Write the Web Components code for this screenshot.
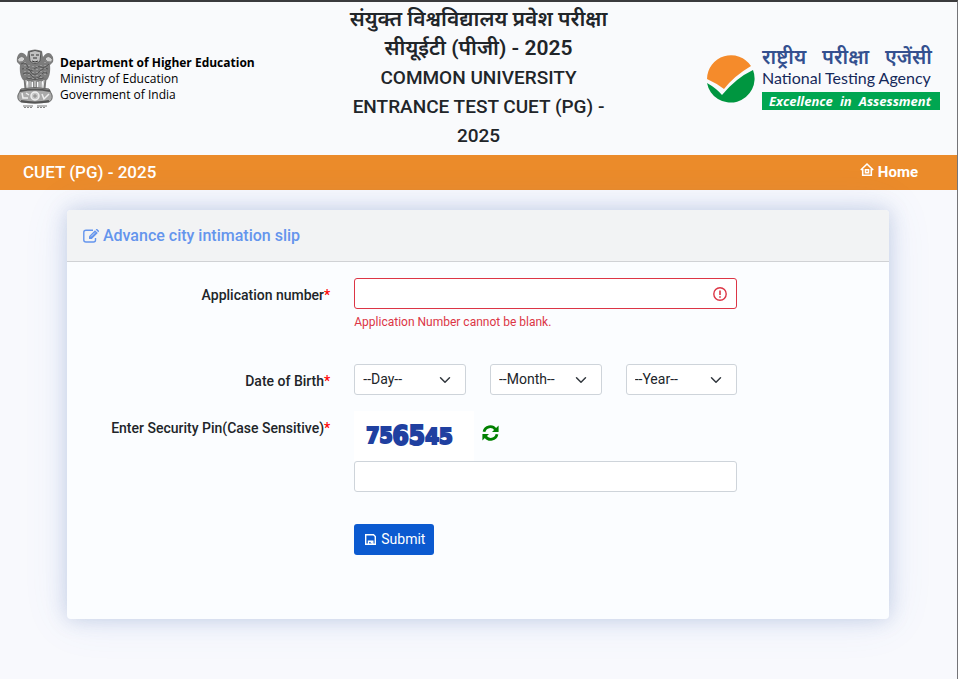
<!DOCTYPE html>
<html lang="en">
<head>
<meta charset="utf-8">
<meta name="viewport" content="width=device-width, initial-scale=1">
<title>CUET (PG) - 2025</title>
<style>
  body {
    margin: 0;
    min-height: 100vh;
    box-sizing: border-box;
    border-top: 2px solid #3b3b3d;
    border-right: 1px solid #747478;
    background-color: #f8f9fd;
    color: #212529;
    font-family: Roboto, "Noto Sans Devanagari", "Noto Sans", sans-serif;
    font-size: 14px;
    line-height: 21px;
  }
  main { padding-right: 1px; }
</style>
</head>
<body>
<site-header></site-header>
<nav-bar>CUET (PG) - 2025</nav-bar>
<main>
  <form-card>
    <span slot="title">Advance city intimation slip</span>
    <slip-form></slip-form>
  </form-card>
</main>

<template id="site-header">
  <style>
    :host {
      display: grid;
      grid-template-columns: 1fr 1fr 1fr;
      align-items: center;
      background-color: #f9fafc;
      min-height: 153px;
    }
    h1 {
      margin: 0;
      padding: 0 12px 2px;
      font-size: 19px;
      line-height: 29px;
      font-weight: 500;
      text-align: center;
    }
    .hindi {
      display: block;
      font-size: 21px;
      font-weight: 600;
    }
    dept-logo { margin-left: 16px; }
    nta-logo { justify-self: end; margin-right: 17px; }
  </style>
  <dept-logo></dept-logo>
  <h1><span class="hindi">संयुक्त विश्वविद्यालय प्रवेश परीक्षा सीयूईटी (पीजी) - 2025</span>COMMON UNIVERSITY ENTRANCE TEST CUET (PG) - 2025</h1>
  <nta-logo></nta-logo>
</template>

<template id="dept-logo">
  <style>
    :host {
      display: flex;
      align-items: center;
      gap: 6px;
      font-family: "Open Sans", sans-serif;
      font-size: 12px;
      line-height: 16px;
      color: #000;
      white-space: nowrap;
    }
    svg { flex: none; }
    p { margin: 0; }
  </style>
  <svg width="38" height="60" viewBox="0 0 38 60" aria-hidden="true">
    <!-- lions -->
    <path d="M12 2Q19-1 26 2L27 8Q31 2 35 5Q38 8 37 13L34 16Q35 26 31 31Q19 35 7 31Q3 26 4 16L1 13Q0 7 4 4Q8 3 11 8Z" fill="#7c7c7c"/>
    <path d="M13 3Q19 0 25 3L24 12Q19 17 14 12Z" fill="#c2c2c2" stroke="#555"/>
    <path d="M15 6H18M20 6H23M17 9H21M16 12Q19 14 22 12" stroke="#333" fill="none"/>
    <path d="M2 10Q6 5 9 10Q7 14 3 13M36 10Q32 5 29 10Q31 14 35 13" fill="#d2d2d2" stroke="#777"/>
    <path d="M5 15Q10 12 12 18T18 20T25 18T33 15M6 20Q12 18 15 23T23 23T32 20M7 25Q12 22 16 27T25 26T31 25M10 29Q19 32 28 29" fill="none" stroke="#555"/>
    <path d="M9 13V28M13 16V30M17 17V31M21 17V31M25 16V30M29 13V28" stroke="#bbb" stroke-dasharray="1 2"/>
    <!-- legs -->
    <path d="M9 29L10 40M14 30V41M24 30V41M29 29L28 40" stroke="#777" stroke-width="3"/>
    <path d="M19 31V40" stroke="#888" stroke-width="4"/>
    <path d="M10 31L11 39M14 32V40M19 32V40M24 32V40M28 31L27 39" stroke="#e4e4e4"/>
    <!-- abacus -->
    <path d="M5 40Q19 37 33 40L36 46Q37 51 33 53Q19 55 5 53Q1 51 2 46Z" fill="#aaa" stroke="#666"/>
    <path d="M4 42Q19 39 34 42M5 52Q19 55 33 52" fill="none" stroke="#555" stroke-width="2"/>
    <circle cx="19" cy="47" r="4" fill="#c8c8c8" stroke="#eee" stroke-width="1.5"/>
    <path d="M17 47H21M19 45V49" stroke="#888"/>
    <path d="M6 44L7 49H12M26 45L28 50L33 45M10 44L13 46" fill="none" stroke="#eee" stroke-width="1.500"/>
    <path d="M7 57H17M21 57H31" stroke="#777"/>
    <path d="M8 58.500H17M21 58.500H30" stroke="#888" stroke-dasharray="2 1"/>
  </svg>
  <div>
    <p><b>Department of Higher Education</b></p>
    <p>Ministry of Education</p>
    <p>Government of India</p>
  </div>
</template>

<template id="nta-logo">
  <style>
    :host {
      display: flex;
      align-items: center;
      gap: 6px;
      white-space: nowrap;
    }
    svg { flex: none; }
    p { margin: 0; }
    .text { width: 178px; }
    .hindi {
      margin-right: 8px;
      text-align-last: justify;
      font-size: 20px;
      line-height: 20px;
      font-weight: 600;
      color: #34508f;
    }
    .name {
      font-family: Lato, sans-serif;
      font-size: 16px;
      line-height: 22px;
      color: #15295a;
    }
    .motto {
      margin-top: 3px;
      padding: 0 9px 0 7px;
      background-color: #00a651;
      color: #fff;
      font-family: "Open Sans", sans-serif;
      font-size: 13px;
      line-height: 18px;
      font-weight: 700;
      font-style: italic;
      text-align-last: justify;
    }
  </style>
  <svg width="49" height="53" viewBox="0 0 49 53" aria-hidden="true">
    <path d="M0 27A24 24 0 0 1 44 14Q27 24 17 37Q9 31 0 27Z" fill="#f58b2b"/>
    <path d="M0 31Q9 36 15 43Q29 26 46 18A24 24 0 1 1 0 31Z" fill="#009640"/>
  </svg>
  <div class="text">
    <p class="hindi">राष्ट्रीय परीक्षा एजेंसी</p>
    <p class="name">National Testing Agency</p>
    <p class="motto">Excellence in Assessment</p>
  </div>
</template>

<template id="nav-bar">
  <style>
    :host {
      display: flex;
      justify-content: space-between;
      align-items: center;
      min-height: 35px;
      padding: 0 39px 0 23px;
      background-color: #eb8b2a;
      color: #fff;
      font-size: 17px;
      font-weight: 500;
    }
    a {
      display: flex;
      gap: 4px;
      color: inherit;
      text-decoration: none;
      font-size: 15px;
      font-weight: 700;
    }
  </style>
  <slot></slot>
  <a href="#">
    <svg width="14" height="16" viewBox="0 0 14 16" fill="none" stroke="#fff" stroke-width="1.600" aria-hidden="true">
      <path d="M.8 8L7 2L13.200 8M2.700 7V13.200H11.300V7"/>
      <path d="M5.500 7.800H8.500V10.800H5.500Z"/>
    </svg>
    Home
  </a>
</template>

<template id="form-card">
  <style>
    :host {
      display: block;
      margin: 20px 7% 60px;
      border-radius: 4px;
      background-color: #fbfdff;
      box-shadow: 0 0 20px rgba(70, 105, 160, .25), 0 0 45px rgba(80, 120, 220, .12);
    }
    h2 {
      display: flex;
      align-items: center;
      gap: 4px;
      margin: 0;
      padding: 15px 16px;
      border-bottom: 1px solid #d0d2d5;
      border-radius: 4px 4px 0 0;
      background-color: #f2f3f4;
      color: #6495ed;
      font-size: 16px;
      line-height: 21px;
      font-weight: 500;
    }
    .body { padding: 16px 4px 64px; }
  </style>
  <h2>
    <svg width="16" height="14" viewBox="0 0 16 14" fill="none" stroke="currentColor" aria-hidden="true">
      <path d="M10 1.200H3Q.8 1.200 .8 3.200V11Q.8 13 3 13H10.500Q12.500 13 12.500 11V9" stroke-width="1.400"/>
      <path d="M6 10V7.200L12 1.200L14.800 4L8.800 10Z" fill="currentColor" stroke="none"/>
      <path d="M12.700 .6L13.300 0Q14 -.2 14.500 .3L15.700 1.500Q16.200 2 15.800 2.700L15.300 3.200Z" fill="currentColor" stroke="none"/>
      <path d="M8 7.500L12 3.500" stroke="#f2f3f4" stroke-width=".7"/>
    </svg>
    <slot name="title"></slot>
  </h2>
  <div class="body"><slot></slot></div>
</template>

<template id="form-row">
  <style>
    :host {
      display: grid;
      grid-template-columns: 33.33% 50%;
    }
    .label {
      padding: 7px 12px 0;
      text-align: right;
      font-weight: 500;
    }
    .control { padding: 0 12px; }
  </style>
  <div class="label"><slot name="label"></slot></div>
  <div class="control"><slot></slot></div>
</template>

<template id="slip-form">
  <style>
    :host { display: block; }
    .star { color: #f00; }
    form-row { margin-bottom: 16px; }
    .number { margin-bottom: 33px; }
    .pin { margin-bottom: 32px; }
    .submit { margin-bottom: 0; }
    input, select {
      display: block;
      box-sizing: border-box;
      width: 100%;
      height: 31px;
      padding: 0 8px;
      border: 1px solid #ced4da;
      border-radius: 3px;
      background-color: #fff;
      color: #212529;
      font: inherit;
    }
    select {
      appearance: none;
      background-image: url("data:image/svg+xml,%3Csvg xmlns='http://www.w3.org/2000/svg' viewBox='0 0 16 16'%3E%3Cpath fill='none' stroke='%23343a40' stroke-linecap='round' stroke-linejoin='round' stroke-width='2' d='m2 5 6 6 6-6'/%3E%3C/svg%3E");
      background-repeat: no-repeat;
      background-position: right 14px center;
      background-size: 12px 12px;
    }
    .is-invalid {
      border-color: #dc3545;
      background-image: url("data:image/svg+xml,%3Csvg xmlns='http://www.w3.org/2000/svg' viewBox='0 0 14 14' fill='none' stroke='%23dc3545'%3E%3Ccircle cx='7' cy='7' r='6.200' stroke-width='1.400'/%3E%3Cpath d='M7 3.500V8M7 9.200V10.700' stroke-width='1.600'/%3E%3C/svg%3E");
      background-repeat: no-repeat;
      background-position: right 9px center;
      background-size: 14px 14px;
    }
    .error {
      margin-top: 4px;
      color: #dc3545;
      font-size: 12px;
      line-height: 18px;
    }
    .dates {
      display: grid;
      grid-template-columns: 1fr 1fr 1fr;
      gap: 24px;
    }
    .captcha {
      display: flex;
      align-items: center;
      gap: 8px;
    }
    .refresh {
      display: flex;
      padding: 0;
      border: 0;
      margin-bottom: 6px;
      background: none;
      cursor: pointer;
    }
    .save {
      display: flex;
      align-items: center;
      gap: 4px;
      height: 31px;
      padding: 0 9px 0 10px;
      border: 0;
      border-radius: 3px;
      background-color: #0b5ad0;
      color: #fff;
      font: inherit;
    }
  </style>
  <form>
    <form-row class="number">
      <label slot="label" for="appno">Application number<span class="star">*</span></label>
      <input id="appno" type="text" class="is-invalid" aria-describedby="appno-error">
      <div class="error" id="appno-error">Application Number cannot be blank.</div>
    </form-row>
    <form-row>
      <label slot="label" for="day">Date of Birth<span class="star">*</span></label>
      <div class="dates">
        <select id="day" aria-label="Day"><option>--Day--</option></select>
        <select id="month" aria-label="Month"><option>--Month--</option></select>
        <select id="year" aria-label="Year"><option>--Year--</option></select>
      </div>
    </form-row>
    <form-row class="pin">
      <label slot="label" for="pin">Enter Security Pin(Case Sensitive)<span class="star">*</span></label>
      <div class="captcha">
        <captcha-code>756545</captcha-code>
        <button type="button" class="refresh" aria-label="Refresh">
          <svg width="17" height="16" viewBox="0 0 17 16" fill="none" stroke="#008000" stroke-width="2.800">
            <path d="M2 6.700A6.400 6.400 0 0 1 13.500 4.400M15 9.300A6.400 6.400 0 0 1 3.500 11.600"/>
            <path d="M16.600 .4V7H10ZM.4 15.600V9H7Z" fill="#008000" stroke="none"/>
          </svg>
        </button>
      </div>
      <input id="pin" type="text">
    </form-row>
    <form-row class="submit">
      <button type="submit" class="save">
        <svg width="13" height="13" viewBox="0 0 13 13" fill="none" stroke="#fff" stroke-width="1.400" aria-hidden="true">
          <path d="M1.700 1.700H9.500L11.300 3.500V11.300H1.700Z"/>
          <path d="M4.500 11V8.300H8.800V11M7.300 8.500V10.500"/>
        </svg>
        Submit
      </button>
    </form-row>
  </form>
</template>

<template id="captcha-code">
  <style>
    :host {
      display: flex;
      align-items: center;
      box-sizing: border-box;
      width: 120px;
      height: 50px;
      padding-left: 12px;
      background-color: #fff;
      color: #2040a0;
      font-family: "DejaVu Sans Condensed", "DejaVu Sans", sans-serif;
      font-weight: 700;
      font-size: 21px;
      -webkit-text-stroke: 2px #2040a0;
    }
    .big { font-size: 26px; }
    .mid { font-size: 22px; }
  </style>
</template>

<script>
function define(name) {
  const template = document.getElementById(name);

  window.customElements.define(name, class extends HTMLElement {
    constructor() {
      super();

      this.attachShadow({ mode: "open" });
      this.shadowRoot.appendChild(template.content.cloneNode(true));
    }
  });
}

class CaptchaCode extends HTMLElement {
  constructor() {
    super();

    this.attachShadow({ mode: "open" });
    this.shadowRoot.appendChild(document.getElementById("captcha-code").content.cloneNode(true));
  }

  // digits are drawn in pairs, each pair at its own size
  connectedCallback() {
    const code = this.textContent;
    this.textContent = "";
    ["small", "big", "mid"].forEach((size, i) => {
      const pair = document.createElement("span");
      pair.className = size;
      pair.textContent = code.slice(i * 2, i * 2 + 2);
      this.shadowRoot.appendChild(pair);
    });
  }
}

window.customElements.define("captcha-code", CaptchaCode);
["dept-logo", "nta-logo", "site-header", "nav-bar", "form-card", "form-row", "slip-form"].forEach(define);
</script>
</body>
</html>
